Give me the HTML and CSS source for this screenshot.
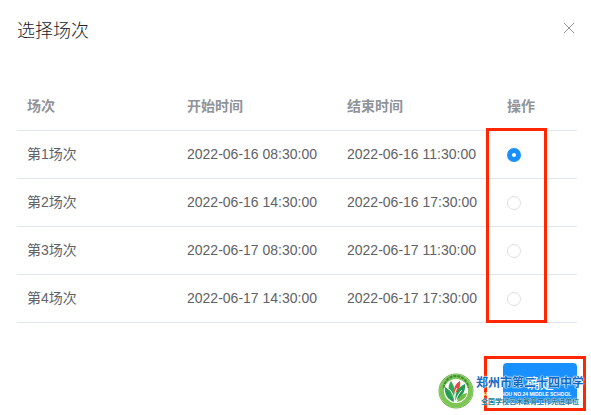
FILE: index.html
```html
<!DOCTYPE html>
<html lang="zh-CN">
<head>
<meta charset="utf-8">
<title>选择场次</title>
<link rel="stylesheet" href="styles.css">
</head>
<body>
<main class="dialog" role="dialog" aria-labelledby="dialog-title">
  <header class="dialog-header">
    <h1 id="dialog-title">选择场次</h1>
    <button class="close" type="button" aria-label="关闭">
      <svg viewBox="0 0 12 12" aria-hidden="true"><path d="M1 1l10 10M11 1L1 11"/></svg>
    </button>
  </header>
  <form class="session-form">
    <div class="table-wrap">
      <table>
        <colgroup><col class="col-wide"><col class="col-wide"><col class="col-wide"><col></colgroup>
        <thead>
          <tr><th>场次</th><th>开始时间</th><th>结束时间</th><th>操作</th></tr>
        </thead>
        <tbody>
          <tr><td><label for="s1">第1场次</label></td><td>2022-06-16 08:30:00</td><td>2022-06-16 11:30:00</td><td><input type="radio" name="session" id="s1" checked></td></tr>
          <tr><td><label for="s2">第2场次</label></td><td>2022-06-16 14:30:00</td><td>2022-06-16 17:30:00</td><td><input type="radio" name="session" id="s2"></td></tr>
          <tr><td><label for="s3">第3场次</label></td><td>2022-06-17 08:30:00</td><td>2022-06-17 11:30:00</td><td><input type="radio" name="session" id="s3"></td></tr>
          <tr><td><label for="s4">第4场次</label></td><td>2022-06-17 14:30:00</td><td>2022-06-17 17:30:00</td><td><input type="radio" name="session" id="s4"></td></tr>
        </tbody>
      </table>
      <div class="mark mark-radios"></div>
    </div>
    <footer class="dialog-footer">
      <div class="confirm-wrap">
        <button class="confirm" type="submit"><span>确定</span></button>
        <div class="mark mark-confirm"></div>
        <div class="watermark">
          <svg class="emblem" viewBox="0 0 36 36" aria-hidden="true">
            <circle cx="18" cy="18" r="17" fill="#fff" stroke="#5fae3c" stroke-width="1"/>
            <circle cx="18" cy="18" r="14" fill="none" stroke="#7cc653" stroke-width="5"/>
            <path d="M6 16A12 12 0 0 1 30 16" transform="translate(0 -1)" fill="none" stroke="#3f8f3a" stroke-width="2" stroke-dasharray="3 1"/>
            <circle cx="18" cy="18" r="12" fill="#fff"/>
            <path d="M16 29C10 27 6 21 7 14c5 3 8 8 9 15z" fill="#239b50"/>
            <path d="M16 28C10 21 9 13 13 8c4 6 5 12 3 20z" fill="#35a853"/>
            <path d="M17 21c-2-5 0-10 5-13 1 5-1 9-5 13z" fill="#e64b3c"/>
            <path d="M17 28c0-8 3-14 10-17 1 7-3 13-10 17z" fill="#269b51"/>
            <path d="M19 29c2-6 5-8 10-9-1 5-5 8-10 9z" fill="#70bd43"/>
            <path d="M17 29c-1-6-3-10-6-13M17 28c-1-6 0-10 2-13M18 28c1-5 3-8 6-11" fill="none" stroke="#fff" stroke-width="1"/>
          </svg>
          <div class="school">
            <span class="school-name">郑州市第二十四中学</span>
            <span class="school-en">ZHENGZHOU NO.24 MIDDLE SCHOOL</span>
            <span class="school-honor">全国学校艺术教育工作先进单位</span>
          </div>
        </div>
      </div>
    </footer>
  </form>
</main>
</body>
</html>
```
FILE: styles.css
```css
* { box-sizing: border-box; }

body {
  margin: 0;
  background: #fff;
  color: #606266;
  font: 14px/24px "Liberation Sans", "Noto Sans CJK SC", sans-serif;
}

.dialog { padding: 19px 14px 12px 17px; }

.dialog-header {
  display: flex;
  align-items: flex-start;
  justify-content: space-between;
}

h1 {
  margin: 0;
  color: #202124;
  font-size: 18px;
  font-weight: 300;
  line-height: 24px;
}

.close {
  display: flex;
  padding: 3px 2px;
  border: 0;
  background: none;
}

.close svg {
  width: 12px;
  height: 12px;
  fill: none;
  stroke: #909399;
  stroke-width: 1;
}

.table-wrap {
  position: relative;
  margin-top: 40px;
}

table {
  width: 100%;
  border-collapse: separate;
  border-spacing: 0;
  table-layout: fixed;
}

.col-wide { width: 160px; }

th, td {
  height: 48px;
  padding: 0 0 2px 10px;
  border-bottom: 1px solid #dfe6ec;
  text-align: left;
  vertical-align: middle;
  white-space: nowrap;
}

td:last-child { padding-bottom: 0; }

th {
  color: #909399;
  font-weight: 700;
}

input[type="radio"] {
  display: block;
  width: 14px;
  height: 14px;
  margin: 0;
  border: 1px solid #dcdfe6;
  border-radius: 50%;
  background: #fff;
  appearance: none;
}

input[type="radio"]:checked {
  border: 5px solid #1890ff;
}

.mark {
  position: absolute;
  border: 3px solid #ff2600;
  pointer-events: none;
}

.mark-radios {
  top: 45px;
  bottom: 0;
  left: 469px;
  width: 61px;
}

.dialog-footer {
  display: flex;
  justify-content: flex-end;
  margin-top: 40px;
}

.confirm-wrap { position: relative; }

.confirm {
  display: block;
  padding: 8px 23px;
  border: 0;
  border-radius: 4px;
  background: #1890ff;
  color: #fff;
  font: inherit;
}

.mark-confirm {
  top: -7px;
  right: -9px;
  bottom: -8px;
  left: -19px;
}

.watermark {
  position: absolute;
  top: 10px;
  right: -7px;
  display: flex;
  gap: 2px;
  white-space: nowrap;
  pointer-events: none;
}

.emblem {
  width: 36px;
  height: 36px;
}

.school {
  display: flex;
  flex-direction: column;
  align-items: center;
  padding-top: 2px;
}

.school-name {
  color: #1068c4;
  font-size: 12px;
  font-weight: 700;
  line-height: 16px;
  text-shadow: 0 0 1px #fff, 0 0 1px #fff, 0 0 1px #fff, 0 0 2px #fff;
}

.school-en {
  margin-right: 8px;
  color: #fff;
  font-size: 5px;
  font-weight: 700;
  line-height: 6px;
}

.school-honor {
  color: #207b9b;
  font-size: 7px;
  font-weight: 700;
  line-height: 10px;
  text-shadow: 0 0 1px #fff, 0 0 1px #fff;
}
```
